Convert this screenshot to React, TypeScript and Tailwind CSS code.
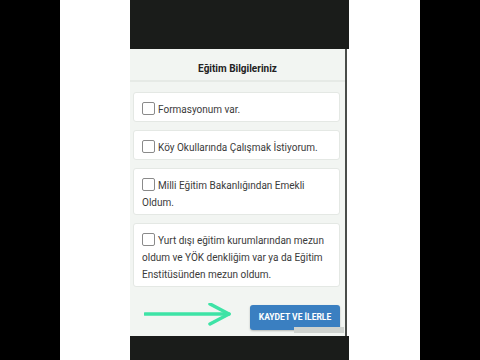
import React from 'react'

const OPTIONS = [
  'Formasyonum var.',
  'Köy Okullarında Çalışmak İstiyorum.',
  'Milli Eğitim Bakanlığından Emekli Oldum.',
  'Yurt dışı eğitim kurumlarından mezun oldum ve YÖK denkliğim var ya da Eğitim Enstitüsünden mezun oldum.',
]

const CheckRow: React.FC<{ label: string }> = ({ label }) => (
  <div className="bg-white border border-[#e4e8e4] rounded-[3px] px-[8px] pt-[8px] pb-[3px] text-[10px] leading-[17px] text-[#3a3a3a]">
    <span className="inline-block w-[13px] h-[13px] border border-[#8a8a8a] rounded-[2px] bg-white align-[-2px] mr-[3px]" />
    {label}
  </div>
)

export default function App() {
  return (
    <div className="w-[480px] h-[360px] flex bg-black overflow-hidden" style={{ fontFamily: 'Roboto, "Liberation Sans", sans-serif' }}>
      <div className="w-[60px] shrink-0 bg-black" />
      <div className="w-[70px] shrink-0 bg-white" />
      <div className="w-[219px] shrink-0 flex flex-col">
        <div className="h-[49px] bg-[#1a1c1a]" />
        <div className="flex-1 flex bg-white">
          <div className="flex-1 flex flex-col bg-[#f2f5f2] border-r-2 border-[#4a4d4a] mr-[2px]">
            <div className="h-[33px] pt-[13px] text-center leading-[14px] border-b-2 border-[#e6eae6] text-[10px] font-bold text-[#222]">
              Eğitim Bilgileriniz
            </div>
            <div className="flex flex-col gap-[8px] pl-[3px] pr-[5px] pt-[10px]">
              {OPTIONS.map((o) => (
                <CheckRow key={o} label={o} />
              ))}
            </div>
            <div className="flex items-center justify-between pl-[14px] pr-[5px] mt-[16px]">
              <svg width="88" height="26" viewBox="0 0 88 26" fill="none">
                <path d="M1 11 H85" stroke="#3ee3a6" strokeWidth="3.5" strokeLinecap="round" />
                <path d="M66 1 L85 11 L66 21" stroke="#3ee3a6" strokeWidth="3.5" strokeLinecap="round" strokeLinejoin="round" />
              </svg>
              <div className="relative">
                <button className="h-[25px] w-[90px] rounded-[3px] bg-[#3a7fc1] text-white text-[8.5px] font-bold shadow-[0_1px_2px_rgba(0,0,0,0.25)]">
                  KAYDET VE İLERLE
                </button>
                <div className="absolute left-[44px] right-[-4px] top-[24px] h-[6px] bg-[#cfd3cf]" />
              </div>
            </div>
          </div>
        </div>
        <div className="h-[24px] bg-[#1a1c1a]" />
      </div>
      <div className="w-[71px] shrink-0 bg-white" />
      <div className="w-[60px] shrink-0 bg-black" />
    </div>
  )
}
